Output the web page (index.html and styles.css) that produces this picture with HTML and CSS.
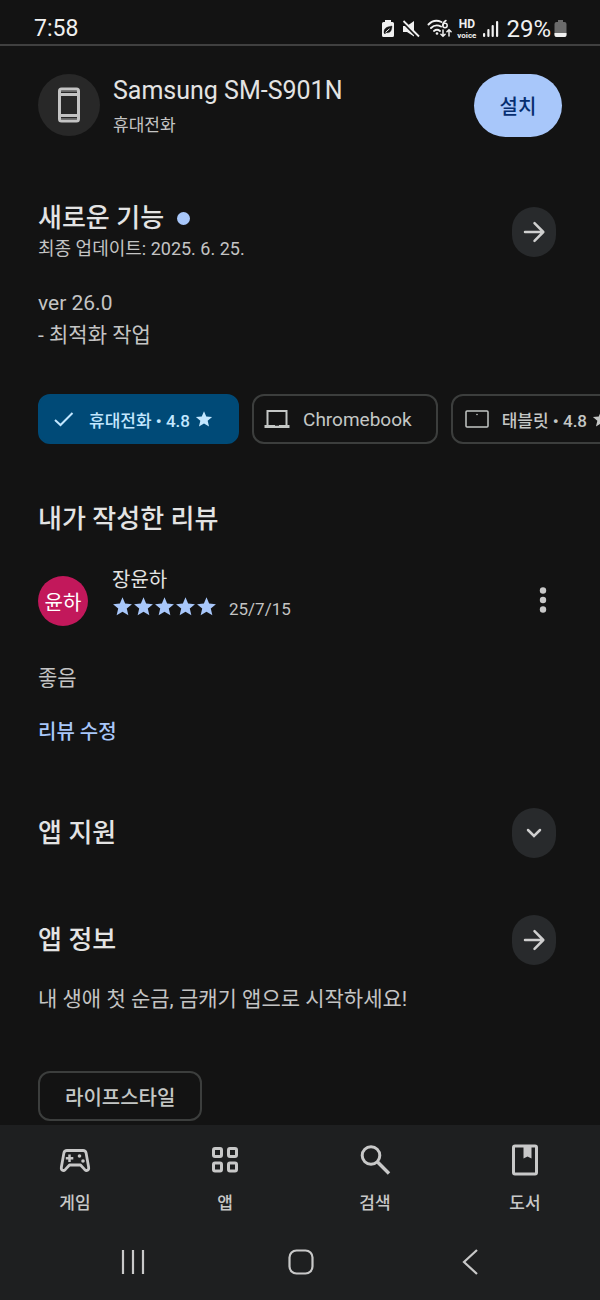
FILE: index.html
```html
<!DOCTYPE html>
<html lang="ko">
<head>
<meta charset="utf-8">
<meta name="viewport" content="width=device-width, initial-scale=1">
<title>앱 세부정보</title>
<link rel="stylesheet" href="styles.css">
</head>
<body>
<svg class="defs" aria-hidden="true">
  <symbol id="star" viewBox="0 0 24 24"><path d="M12 1.500l3 7.200 7.800.6-5.900 5.100 1.800 7.600-6.700-4-6.700 4 1.800-7.600L1.200 9.300l7.800-.6z" fill="currentColor"/></symbol>
  <symbol id="arrow" viewBox="0 0 24 24"><path d="M3 12h18M12.500 3.200L21.300 12l-8.800 8.800" fill="none" stroke="currentColor" stroke-width="2.500" stroke-linecap="round" stroke-linejoin="round"/></symbol>
</svg>
<div class="screen">
  <header class="status">
    <time class="status-time">7:58</time>
    <div class="status-icons">
      <svg width="14" height="20" viewBox="0 0 14 20"><path d="M4 1h6v2h1.500A1.500 1.500 0 0 1 13 4.500v12a1.500 1.500 0 0 1-1.500 1.500h-9A1.500 1.500 0 0 1 1 16.500v-12A1.500 1.500 0 0 1 2.500 3H4z" fill="#f0f0f0"/><path d="M3 14c0-4 1-6 8-7-.3 5-2 7.500-6 6.500L4 15zM5 13l4-4" fill="#141414" stroke="#141414" stroke-width=".4"/><path d="M4.500 13.300L8.500 9.800" stroke="#f0f0f0" stroke-width="1"/></svg>
      <svg width="18" height="18" viewBox="0 0 18 18"><path d="M1 6h4l7-5v15.500L5 12H1z" fill="#f0f0f0"/><path d="M0 1.500L16 18" stroke="#141414" stroke-width="2"/><path d="M1.500 1L17 16.500" stroke="#f0f0f0" stroke-width="1.800"/></svg>
      <svg width="26" height="20" viewBox="0 0 26 20" fill="none" stroke="#f0f0f0" stroke-width="1.900" stroke-linecap="round"><path d="M1.500 5.500C5 1.800 10 1 14.500 3M4 9c3-3 6.500-3.300 10-1.500M7 12c2-1.600 4-1.600 6 0"/><circle cx="10" cy="14.500" r="1.300" fill="#f0f0f0" stroke="none"/><circle cx="18" cy="6.500" r="2.200" stroke-width="1.500"/><path d="M19 1.500c-2 1-3.100 2.700-3.100 5" stroke-width="1.500"/><path d="M16 11v6M13.900 15.200L16 17.300l2.100-2.100M22 17v-6M19.900 12.800L22 10.700l2.100 2.100" stroke-width="1.500"/></svg>
      <span class="hd"><b>HD</b><small>voice</small></span>
      <svg class="signal" width="16" height="18" viewBox="0 0 16 18" fill="#f0f0f0"><rect x="0" y="13" width="2.200" height="4" rx="1"/><rect x="4.300" y="9" width="2.200" height="8" rx="1"/><rect x="8.600" y="5" width="2.200" height="12" rx="1"/><rect x="13" y="1" width="2.200" height="16" rx="1"/></svg>
      <span class="percent">29%</span>
      <svg width="13" height="18" viewBox="0 0 13 18"><path d="M4 0h5v2h1.500A2 2 0 0 1 12.500 4v11a2 2 0 0 1-2 2h-8a2 2 0 0 1-2-2V4a2 2 0 0 1 2-2H4z" fill="#6b6b6b"/><path d="M.5 13h12v2a2 2 0 0 1-2 2h-8a2 2 0 0 1-2-2z" fill="#f0f0f0"/></svg>
    </div>
  </header>

  <main class="content">
    <section class="device">
      <span class="device-icon"><svg width="24" height="36" viewBox="0 0 24 36" fill="none" stroke="#c4c4c4" stroke-width="3"><rect x="2.500" y="2" width="19" height="32" rx="2"/><path d="M2 7.500h20M2 28.500h20" stroke-width="3"/><path d="M4 4.300h16M4 31.700h16" stroke="#777" stroke-width="1"/></svg></span>
      <div class="device-text">
        <h1 class="device-name">Samsung SM-S901N</h1>
        <p class="device-kind">휴대전화</p>
      </div>
      <button class="install" type="button">설치</button>
    </section>

    <section class="news">
      <div class="row">
        <div>
          <h2 class="title">새로운 기능<span class="dot"></span></h2>
          <p class="caption">최종 업데이트: 2025. 6. 25.</p>
        </div>
        <button class="round" type="button" aria-label="새로운 기능 더보기"><svg width="24" height="24"><use href="#arrow"/></svg></button>
      </div>
      <p class="body">ver 26.0<br>- 최적화 작업</p>
    </section>

    <div class="chips">
      <button class="chip chip-on" type="button"><svg width="24" height="24" viewBox="0 0 24 24"><path d="M3 13l5.500 5L20.500 6" fill="none" stroke="currentColor" stroke-width="2"/></svg><span>휴대전화 • 4.8</span><svg class="chip-star" width="18" height="18"><use href="#star"/></svg></button>
      <button class="chip chip-plain" type="button"><svg width="26" height="22" viewBox="0 0 26 22" fill="none" stroke="currentColor" stroke-width="2"><path d="M3.500 17V3h19v14"/><path d="M.5 18.500h25" stroke-width="3"/><path d="M11 17.500h4" stroke="#444" stroke-width="1"/></svg><span>Chromebook</span></button>
      <button class="chip" type="button"><svg width="24" height="20" viewBox="0 0 24 20" fill="none" stroke="currentColor" stroke-width="1.500"><rect x="1" y="2" width="22" height="16" rx="1"/><circle cx="12" cy="5.500" r=".8" fill="currentColor" stroke="none"/></svg><span>태블릿 • 4.8</span><svg class="chip-star" width="18" height="18"><use href="#star"/></svg></button>
    </div>

    <section class="review">
      <h2 class="title">내가 작성한 리뷰</h2>
      <div class="author">
        <span class="avatar">윤하</span>
        <div class="author-text">
          <p class="author-name">장윤하</p>
          <div class="rating">
            <span class="stars" role="img" aria-label="별점 5점"><svg width="21" height="21"><use href="#star"/></svg><svg width="21" height="21"><use href="#star"/></svg><svg width="21" height="21"><use href="#star"/></svg><svg width="21" height="21"><use href="#star"/></svg><svg width="21" height="21"><use href="#star"/></svg></span>
            <time class="date">25/7/15</time>
          </div>
        </div>
        <button class="more" type="button" aria-label="옵션 더보기"><svg width="8" height="28" viewBox="0 0 8 28" fill="#c8c8c8"><circle cx="4" cy="4.500" r="3.200"/><circle cx="4" cy="14" r="3.200"/><circle cx="4" cy="23.500" r="3.200"/></svg></button>
      </div>
      <p class="body">좋음</p>
      <a class="edit" href="#">리뷰 수정</a>
    </section>

    <section class="row support">
      <h2 class="title">앱 지원</h2>
      <button class="round" type="button" aria-label="앱 지원 펼치기"><svg width="24" height="24" viewBox="0 0 24 24"><path d="M6 9l6 6 6-6" fill="none" stroke="currentColor" stroke-width="2.500" stroke-linecap="round"/></svg></button>
    </section>

    <section class="about">
      <div class="row">
        <h2 class="title">앱 정보</h2>
        <button class="round" type="button" aria-label="앱 정보 더보기"><svg width="24" height="24"><use href="#arrow"/></svg></button>
      </div>
      <p class="body">내 생애 첫 순금, 금캐기 앱으로 시작하세요!</p>
      <button class="tag" type="button">라이프스타일</button>
    </section>
  </main>

  <footer class="bottom">
    <nav class="tabs">
      <a class="tab" href="#"><svg width="34" height="34" viewBox="0 0 34 34" fill="none" stroke="currentColor" stroke-width="2.800" stroke-linejoin="round"><path d="M9 7.500h16c1.800 0 2.800 1 3.100 2.500l2.500 14c.6 3.600-2 4.400-4 2.400L22.500 22h-11l-4.100 4.400c-2 2-4.600 1.200-4-2.400l2.500-14c.3-1.500 1.300-2.500 3.100-2.500z"/><path d="M11.500 11.500v7.500M7.800 15.300h7.500" stroke-width="2.500"/><circle cx="21.500" cy="13" r="1.800" fill="currentColor" stroke="none"/><circle cx="25" cy="18" r="1.800" fill="currentColor" stroke="none"/></svg><span>게임</span></a>
      <a class="tab" href="#"><svg width="34" height="34" viewBox="0 0 34 34" fill="none" stroke="currentColor" stroke-width="3"><rect x="5.500" y="5.500" width="8" height="8" rx="1.500"/><rect x="20.500" y="5.500" width="8" height="8" rx="1.500"/><rect x="5.500" y="20" width="8" height="8" rx="1.500"/><rect x="20.500" y="20" width="8" height="8" rx="1.500"/></svg><span>앱</span></a>
      <a class="tab" href="#"><svg width="34" height="34" viewBox="0 0 34 34" fill="none" stroke="currentColor" stroke-width="3"><circle cx="13" cy="12.500" r="8.800"/><path d="M19.300 18.800L31 30.500" stroke-width="3.400"/></svg><span>검색</span></a>
      <a class="tab" href="#"><svg width="34" height="34" viewBox="0 0 34 34" fill="none" stroke="currentColor" stroke-width="3"><rect x="5.500" y="3" width="23" height="28" rx="1.500"/><path d="M15.500 3h8v12.500l-4-2-4 2z" fill="currentColor" stroke="none"/></svg><span>도서</span></a>
    </nav>
    <div class="system">
      <button class="key" type="button" aria-label="최근 앱"><svg width="28" height="28" viewBox="0 0 28 28" stroke="currentColor" stroke-width="2.200"><path d="M4 2v24M14 2v24M24 2v24"/></svg></button>
      <button class="key" type="button" aria-label="홈"><svg width="28" height="28" viewBox="0 0 28 28" fill="none" stroke="currentColor" stroke-width="2.200"><rect x="3.500" y="2.500" width="23" height="23" rx="7"/></svg></button>
      <button class="key" type="button" aria-label="뒤로"><svg width="28" height="28" viewBox="0 0 28 28" fill="none" stroke="currentColor" stroke-width="2.200"><path d="M24 2L11 14l13 12"/></svg></button>
    </div>
  </footer>
</div>
</body>
</html>
```
FILE: styles.css
```css
* {
  box-sizing: border-box;
}

body,
h1,
h2,
p {
  margin: 0;
}

body {
  background: #131313;
  color: #e3e3e3;
  font-family: Roboto, "Noto Sans CJK KR", sans-serif;
}

button {
  border: 0;
  padding: 0;
  background: none;
  color: inherit;
  font: inherit;
}

a {
  text-decoration: none;
}

svg {
  display: block;
  flex: none;
}

.defs {
  position: absolute;
  width: 0;
  height: 0;
}

.screen {
  display: flex;
  flex-direction: column;
  height: 100vh;
}

.status {
  display: flex;
  align-items: center;
  justify-content: space-between;
  flex: none;
  padding: 14px 33px 0 34px;
  border-bottom: 2px solid #404040;
  color: #f0f0f0;
  font-size: 23px;
  line-height: 30px;
}

.status-icons {
  display: flex;
  align-items: center;
  gap: 7px;
}

.hd {
  display: flex;
  flex-direction: column;
  align-items: center;
  margin: 0 0 0 -3px;
}

.hd b {
  font-size: 12px;
  line-height: 14px;
}

.hd small {
  font-size: 8px;
  font-weight: 700;
  line-height: 10px;
}

.percent {
  margin-right: -4px;
  font-size: 24px;
}

.content {
  flex: 1;
  min-height: 0;
  overflow: hidden;
  padding-left: 38px;
}

.device,
.news,
.review,
.support,
.about {
  padding-right: 44px;
}

.device {
  display: flex;
  align-items: center;
  padding-top: 26px;
  padding-right: 38px;
}

.device-icon {
  display: grid;
  place-items: center;
  width: 62px;
  height: 62px;
  border-radius: 50%;
  background: #282828;
}

.device-text {
  flex: 1;
  padding: 2px 0 0 13px;
}

.device-name {
  font-size: 25px;
  font-weight: 400;
  line-height: 34px;
}

.device-kind {
  padding-top: 4px;
  color: #c4c4c4;
  font-size: 17px;
  line-height: 26px;
}

.caption {
  color: #c4c4c4;
  font-size: 18px;
  line-height: 28px;
}

.install {
  width: 88px;
  height: 63px;
  border-radius: 32px;
  background: #a8c7fa;
  color: #062e6f;
  font-size: 20px;
  font-weight: 500;
}

.row {
  display: flex;
  align-items: center;
  justify-content: space-between;
}

.news {
  padding-top: 63px;
}

.title {
  display: flex;
  align-items: center;
  gap: 13px;
  font-size: 26px;
  font-weight: 500;
  line-height: 34px;
}

.dot {
  width: 13px;
  height: 13px;
  border-radius: 50%;
  background: #a8c7fa;
}

.round {
  display: grid;
  place-items: center;
  width: 44px;
  height: 50px;
  border-radius: 22px;
  background: #282a2c;
  color: #cfcfcf;
}

.body {
  color: #c4c4c4;
  font-size: 21px;
  line-height: 32px;
}

.news .body {
  padding-top: 24px;
}

.chips {
  display: flex;
  gap: 13px;
  padding-top: 43px;
  overflow: hidden;
}

.chip {
  display: flex;
  align-items: center;
  flex: none;
  gap: 13px;
  height: 50px;
  padding: 0 24px 0 12px;
  border: 2px solid #3c3e3d;
  border-radius: 12px;
  color: #c4c7c5;
  font-size: 17px;
  font-weight: 500;
}

.chip-plain {
  padding: 0 24px 0 10px;
  font-size: 19px;
  font-weight: 400;
}

.chip-on {
  border-color: #004a77;
  background: #004a77;
  color: #c2e7ff;
}

.chip-star {
  margin-left: -8px;
}

.review {
  padding-top: 58px;
}

.author {
  display: flex;
  align-items: flex-end;
  padding-top: 26px;
}

.avatar {
  display: grid;
  place-items: center;
  width: 50px;
  height: 50px;
  border-radius: 50%;
  background: #c2185b;
  color: #fff;
  font-size: 20px;
}

.author-text {
  flex: 1;
  padding-left: 24px;
}

.author-name {
  padding-top: 2px;
  font-size: 20px;
  line-height: 32px;
}

.rating {
  display: flex;
  align-items: flex-start;
  gap: 12px;
  padding-bottom: 4px;
}

.stars {
  display: flex;
  color: #a8c7fa;
}

.date {
  color: #c4c4c4;
  font-size: 17px;
  line-height: 26px;
}

.more {
  padding: 0 9px 12px;
}

.review .body {
  padding-top: 36px;
}

.edit {
  display: block;
  padding-top: 22px;
  color: #a8c7fa;
  font-size: 20px;
  font-weight: 500;
  line-height: 32px;
}

.support {
  padding-top: 60px;
}

.about {
  padding-top: 57px;
}

.about .body {
  padding-top: 18px;
}

.tag {
  height: 50px;
  margin-top: 56px;
  padding: 0 25px;
  border: 2px solid #3c3e3d;
  border-radius: 12px;
  color: #c4c7c5;
  font-size: 20px;
  font-weight: 500;
}

.bottom {
  flex: none;
  background: #1e1f20;
  color: #c8c8c8;
}

.tabs {
  display: grid;
  grid-template-columns: repeat(4, 1fr);
  padding-top: 18px;
}

.tab {
  display: flex;
  flex-direction: column;
  align-items: center;
  gap: 12px;
  color: inherit;
  font-size: 17px;
  font-weight: 500;
  line-height: 28px;
}

.system {
  display: grid;
  grid-template-columns: repeat(3, 1fr);
  padding: 31px 50px 24px;
}

.key {
  display: grid;
  place-items: center;
}
```
